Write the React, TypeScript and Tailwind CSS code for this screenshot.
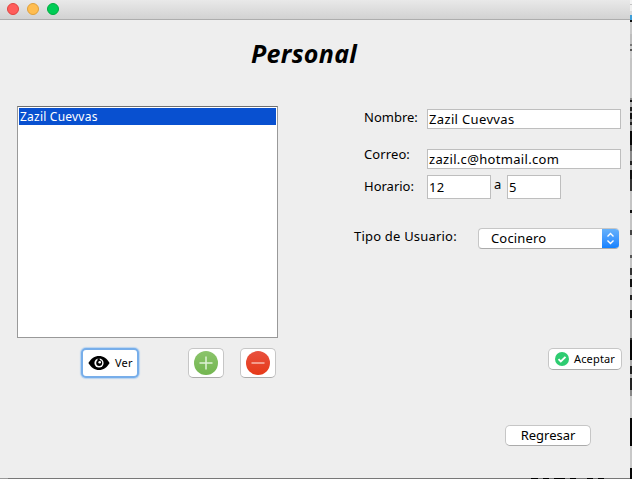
import React from 'react';

const STRIP: [number, number, string][] = [
  [0, 4, '#f4f4f4'], [4, 1, '#c4c4c4'], [5, 6, '#f0f0f0'], [11, 4, '#dcdcdc'], [15, 5, '#3f9fd8'],
  [20, 2, '#111'], [22, 12, '#c9c9c9'], [34, 10, '#bdbdbd'], [44, 2, '#777'], [46, 3, '#c9c9c9'],
  [49, 2, '#555'], [51, 7, '#c9c9c9'], [58, 40, '#c4c4c4'], [98, 2, '#888'], [100, 2, '#111'], [102, 5, '#aaa'],
  [107, 4, '#222'], [111, 2, '#999'], [113, 6, '#111'], [119, 3, '#777'], [122, 3, '#222'], [125, 6, '#999'],
  [131, 14, '#080808'], [145, 6, '#555'], [151, 10, '#888'], [161, 4, '#222'], [165, 5, '#aaa'],
  [170, 9, '#111'], [179, 12, '#333'], [191, 19, '#c4c4c4'], [210, 3, '#111'], [213, 17, '#c4c4c4'],
  [230, 5, '#444'], [235, 20, '#c8c8c8'], [255, 3, '#555'], [258, 10, '#c4c4c4'], [268, 7, '#333'],
  [275, 4, '#bbb'], [279, 8, '#111'], [287, 8, '#bbb'], [295, 5, '#222'], [300, 10, '#c4c4c4'],
  [310, 8, '#111'], [318, 20, '#aaa'], [338, 2, '#333'], [340, 20, '#050505'], [360, 6, '#aaa'],
  [366, 8, '#222'], [374, 4, '#aaa'], [378, 12, '#222'], [390, 6, '#888'], [396, 22, '#c8c8c8'],
  [418, 28, '#050505'], [446, 22, '#c8c8c8'], [468, 11, '#050505'],
];

const raised = 'shrink-0 rounded-[5px] border border-[#c6c6c6] border-b-[#ababab] bg-white';
const field = 'block border border-[#bebebe] bg-white pl-px text-black whitespace-nowrap';
const label = 'text-[13px] leading-4 whitespace-nowrap';

function Circle({ color, border }: { color: string; border: string }) {
  return <i className={`block h-3 w-3 rounded-full border ${color} ${border}`} />;
}

function TitleBar() {
  return (
    <header className="flex h-5 items-start gap-2 border-b border-[#adadad] bg-linear-to-b from-[#e9e9e9] to-[#d2d2d2] pt-[3px] pl-[7px]">
      <Circle color="bg-[#ff5d5b]" border="border-[#e0443f]" />
      <Circle color="bg-[#ffbd4f]" border="border-[#dfa03a]" />
      <Circle color="bg-[#00cd56]" border="border-[#00ac40]" />
    </header>
  );
}

function EyeIcon() {
  return (
    <svg width="22" height="16" viewBox="0 0 22 16">
      <path d="M.4 8C3 3.500 6.700 1 11 1s8 2.500 10.600 7C19 12.500 15.300 15 11 15S3 12.500.4 8Z" fill="#000" />
      <circle cx="11" cy="8" r="4.600" fill="#fff" />
      <circle cx="11.200" cy="8" r="3" fill="#000" />
      <path d="M9.500 3.200h2.300v2.300L9.500 6Z" fill="#000" />
      <circle cx="11.700" cy="7.300" r="1.300" fill="#fff" />
    </svg>
  );
}

function RoundIcon({ kind }: { kind: 'add' | 'remove' }) {
  const add = kind === 'add';
  return (
    <svg width="24" height="24" viewBox="0 0 24 24">
      <defs>
        <linearGradient id={kind} x1="0" y1="0" x2="0" y2="1">
          <stop stopColor={add ? '#8bc46b' : '#e8513f'} />
          <stop offset="1" stopColor={add ? '#73b650' : '#e63917'} />
        </linearGradient>
      </defs>
      <circle cx="12" cy="12" r="12" fill={`url(#${kind})`} />
      <path d={add ? 'M5.500 12h13M12 5.500v13' : 'M5.500 12h13'} stroke={add ? '#e0f2d7' : '#f9b9ab'} strokeWidth="1.500" />
    </svg>
  );
}

export default function App() {
  return (
    <div className="flex h-[479px] w-[632px] overflow-hidden bg-[#eee] font-['Noto_Sans',sans-serif] text-black">
      <div className="flex w-[630px] flex-col bg-[#eee]">
        <TitleBar />
        <main className="flex h-[458px] flex-col">
          <h1 className="mt-[18px] ml-[251px] h-[30px] text-[25px] leading-[30px] font-bold italic tracking-[0.3px]">Personal</h1>
          <div className="mt-[38px] flex h-[272px]">
            <section className="ml-[17px] w-[261px]">
              <ul className="h-[232px] border border-[#999] border-t-[#6f6f6f] bg-white p-px">
                <li className="h-[17px] bg-[#0850d0] pl-px text-[12px] leading-[17px] tracking-[0.22px] text-white">Zazil Cuevvas</li>
              </ul>
              <div className="mt-[10px] flex pl-16">
                <button className="flex h-[30px] w-[58px] items-center rounded-[5px] border-2 border-[#77aeea] bg-white pl-[5px] shadow-[0_0_1px_1px_#b7d3f0]">
                  <EyeIcon />
                  <span className="ml-[5px] text-[11px] leading-4 tracking-[0.2px]">Ver</span>
                </button>
                <button className={`${raised} ml-[49px] flex h-[30px] w-9 items-center justify-center`}><RoundIcon kind="add" /></button>
                <button className={`${raised} ml-4 flex h-[30px] w-9 items-center justify-center`}><RoundIcon kind="remove" /></button>
              </div>
            </section>
            <section className="ml-[76px] flex w-[268px] flex-col pt-[3px]">
              <div className="flex h-10">
                <span className={`${label} ml-[10px] w-[63px]`}>Nombre:</span>
                <span className={`${field} h-5 w-[194px] text-[13px] leading-[18px] tracking-[0.35px]`}>Zazil Cuevvas</span>
              </div>
              <div className="flex h-[26px]">
                <span className={`${label} -mt-[3px] ml-[10px] w-[63px] tracking-[0.1px]`}>Correo:</span>
                <span className={`${field} h-5 w-[194px] text-[13px] leading-[18px] tracking-[0.32px]`}>zazil.c@hotmail.com</span>
              </div>
              <div className="flex h-[53px]">
                <span className={`${label} ml-[10px] w-[63px] pt-[3px]`}>Horario:</span>
                <span className={`${field} h-6 w-16 text-[13px] leading-[22px] tracking-[0.4px]`}>12</span>
                <span className={`${label} w-4 pt-px pl-[3px]`}>a</span>
                <span className={`${field} h-6 w-[54px] text-[13px] leading-[22px]`}>5</span>
              </div>
              <div className="flex h-[120px]">
                <span className={`${label} w-[124px] tracking-[0.2px]`}>Tipo de Usuario:</span>
                <div className="flex h-[21px] w-[141px] overflow-hidden rounded-[4px] border border-r-0 border-[#c6c6c6] border-b-[#ababab] bg-white">
                  <span className="flex-1 pl-3 text-[13px] leading-[18px] tracking-[0.15px]">Cocinero</span>
                  <span className="-my-px flex h-[21px] w-[17px] items-center justify-center bg-linear-to-b from-[#69b3fa] to-[#087fff]">
                    <svg width="9" height="13" viewBox="0 0 9 13" fill="none" stroke="#fff" strokeWidth="1.400">
                      <path d="m1.500 4.500 3-3 3 3M1.500 8.500l3 3 3-3" />
                    </svg>
                  </span>
                </div>
              </div>
              <button className={`${raised} ml-[194px] flex h-[22px] w-[74px] items-center pl-1.5`}>
                <svg width="14" height="14" viewBox="0 0 14 14" fill="none">
                  <circle cx="7" cy="7" r="7" fill="#2ecc71" />
                  <path d="m3.500 7.200 2.300 2.300 4.700-4.700" stroke="#fff" strokeWidth="1.900" />
                </svg>
                <span className="ml-[5px] text-[11px] leading-4 tracking-[0.15px]">Aceptar</span>
              </button>
            </section>
          </div>
          <button className={`${raised} mt-[47px] ml-[505px] h-[21px] w-[86px] pb-px text-[13px] leading-[18px]`}>Regresar</button>
        </main>
        <footer className="flex h-px bg-[#777]">
          <i className="h-px w-2 bg-[#999]" />
          <i className="ml-[523px] h-px w-[7px] bg-black" />
          <i className="ml-[5px] h-px w-[6px] bg-black" />
          <i className="ml-[5px] h-px w-[11px] bg-black" />
          <i className="ml-[5px] h-px w-[6px] bg-black" />
          <i className="ml-[11px] h-px w-[6px] bg-black" />
          <i className="ml-[5px] h-px w-[6px] bg-black" />
        </footer>
      </div>
      <svg width="2" height="479" shapeRendering="crispEdges">
        {STRIP.map(([y, h, c]) => <rect key={y} y={y} width="2" height={h} fill={c} />)}
      </svg>
    </div>
  );
}
